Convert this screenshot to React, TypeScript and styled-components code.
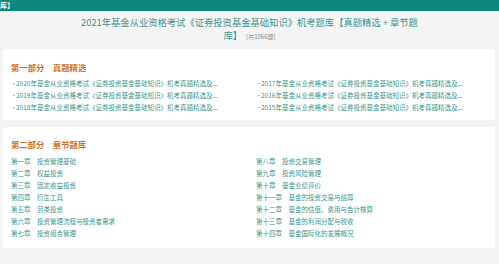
import styled, { createGlobalStyle } from "styled-components";

const GlobalStyle = createGlobalStyle`
  html, body {
    margin: 0;
    padding: 0;
    background: #f4f4f4;
    font-family: "Noto Sans CJK SC", "Noto Sans", sans-serif;
  }
`;

const Page = styled.div`
  width: 499px;
  height: 264px;
  overflow: hidden;
  background: #f4f4f4;
`;

const TopBar = styled.div`
  height: 11px;
  background: #0f877c;
  border-bottom: 1px solid #d4ebe8;
  color: #fff;
  font-size: 7px;
  line-height: 11px;
  font-weight: bold;
`;

const Title = styled.h1`
  margin: 4px 0 0;
  text-align: center;
  font-size: 9.3px;
  line-height: 13px;
  font-weight: normal;
  color: #3b9690;
`;

const Count = styled.span`
  margin-left: 4px;
  font-size: 6px;
  color: #8a8a8a;
`;

const Card = styled.section<{ $top: number; $bottom: number }>`
  margin: 0 4px 0 3px;
  background: #fff;
  border-radius: 4px;
  padding: ${(p) => p.$top}px 8px ${(p) => p.$bottom}px;
  & + & {
    margin-top: 7px;
  }
`;

const SectionTitle = styled.h2<{ $gap: number }>`
  margin: 0 0 ${(p) => p.$gap}px;
  font-size: 8.4px;
  line-height: 12px;
  font-weight: bold;
  color: #cc7333;
`;

const Columns = styled.div`
  display: grid;
  grid-template-columns: 245px 1fr;
`;

const List = styled.ul`
  margin: 0;
  padding: 0;
  list-style: none;
`;

const Item = styled.li<{ $bullet?: boolean }>`
  display: flex;
  align-items: center;
  height: 12px;
  font-size: 6.5px;
  color: #3d958f;
  white-space: nowrap;
  &::before {
    content: ${(p) => (p.$bullet ? '"•"' : "none")};
    color: #d5844a;
    font-size: 6px;
    width: 5px;
  }
`;

const Chapter = styled.span`
  margin-right: 6.5px;
`;

const yearsLeft = ["2020", "2019", "2018"];
const yearsRight = ["2017", "2016", "2015"];

const chaptersLeft = [
  ["第一章", "投资管理基础"],
  ["第二章", "权益投资"],
  ["第三章", "固定收益投资"],
  ["第四章", "衍生工具"],
  ["第五章", "另类投资"],
  ["第六章", "投资管理流程与投资者需求"],
  ["第七章", "投资组合管理"],
];

const chaptersRight = [
  ["第八章", "投资交易管理"],
  ["第九章", "投资风险管理"],
  ["第十章", "基金业绩评价"],
  ["第十一章", "基金的投资交易与结算"],
  ["第十二章", "基金的估值、费用与会计核算"],
  ["第十三章", "基金的利润分配与税收"],
  ["第十四章", "基金国际化的发展概况"],
];

function YearList({ years }: { years: string[] }) {
  return (
    <List>
      {years.map((y) => (
        <Item key={y} $bullet>
          {y}年基金从业资格考试《证券投资基金基础知识》机考真题精选及...
        </Item>
      ))}
    </List>
  );
}

function ChapterList({ items }: { items: string[][] }) {
  return (
    <List>
      {items.map(([no, name]) => (
        <Item key={no}>
          <Chapter>{no}</Chapter>
          {name}
        </Item>
      ))}
    </List>
  );
}

export default function App() {
  return (
    <Page>
      <GlobalStyle />
      <TopBar>库】</TopBar>
      <Title>
        2021年基金从业资格考试《证券投资基金基础知识》机考题库【真题精选 + 章节题
        <br />
        库】<Count>[共1066题]</Count>
      </Title>
      <Card $top={12} $bottom={7} style={{ marginTop: 6 }}>
        <SectionTitle $gap={4}>第一部分　真题精选</SectionTitle>
        <Columns>
          <YearList years={yearsLeft} />
          <YearList years={yearsRight} />
        </Columns>
      </Card>
      <Card $top={11} $bottom={9}>
        <SectionTitle $gap={5}>第二部分　章节题库</SectionTitle>
        <Columns>
          <ChapterList items={chaptersLeft} />
          <ChapterList items={chaptersRight} />
        </Columns>
      </Card>
    </Page>
  );
}
